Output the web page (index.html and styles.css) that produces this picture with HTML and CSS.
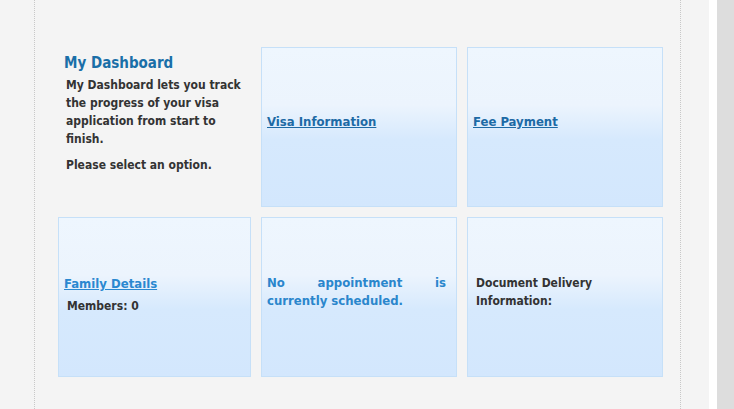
FILE: index.html
```html
<!DOCTYPE html>
<html lang="en">
<head>
    <meta charset="UTF-8">
    <meta name="viewport" content="width=device-width, initial-scale=1.0">
    <title>My Dashboard</title>
    <link rel="stylesheet" href="styles.css">
</head>
<body>

<div class="page">
    <div class="content">
        <div class="dashboard">
            <div class="intro">
                <h2>My Dashboard</h2>
                <p>My Dashboard lets you track the progress of your visa application from start to finish.</p>
                <p>Please select an option.</p>
            </div>

            <div class="tile">
                <a href="#" class="tile-link">Visa Information</a>
            </div>

            <div class="tile">
                <a href="#" class="tile-link">Fee Payment</a>
            </div>

            <div class="tile family">
                <a href="#" class="tile-link light">Family Details</a>
                <div class="members">Members: 0</div>
            </div>

            <div class="tile">
                <div class="appointment">No appointment is currently scheduled.</div>
            </div>

            <div class="tile">
                <div class="delivery">Document Delivery Information:</div>
            </div>
        </div>
    </div>
</div>
<div class="gutter"></div>
<div class="scrollbar"></div>

</body>
</html>
```

FILE: styles.css
```css
body {
    font-family: "DejaVu Sans Condensed", "DejaVu Sans", Verdana, sans-serif;
    background-color: #f4f4f4;
    color: #333;
    margin: 0;
    padding: 0;
    display: flex;
    height: 409px;
    overflow: hidden;
}
.page {
    width: 675px;
    padding-left: 34px;
    background-color: #f4f4f4;
}
.content {
    width: 645px;
    height: 100%;
    border-left: 1px dotted #c8c8c8;
    border-right: 1px dotted #c8c8c8;
    box-sizing: content-box;
}
.gutter {
    width: 8px;
    background-color: #fff;
}
.scrollbar {
    flex: 1;
    background-color: #dddddd;
}
.dashboard {
    display: grid;
    grid-template-columns: 193px 196px 196px;
    grid-auto-rows: 160px;
    gap: 10px;
    padding: 47px 0 0 23px;
}
.intro {
    padding: 7px 0 0 6px;
}
.intro h2 {
    font-size: 15px;
    color: #1a6fa8;
    margin: 0 0 4px;
}
.intro p {
    font-size: 12px;
    font-weight: bold;
    line-height: 18px;
    margin: 0 0 8px 2px;
}
.tile {
    box-sizing: border-box;
    border: 1px solid #c6e0f8;
    background: linear-gradient(#eef6fe 0%, #ecf4fd 36%, #d6e9fd 58%, #d3e7fd 100%);
    display: flex;
    flex-direction: column;
    justify-content: center;
    padding: 0 10px 10px 5px;
    font-size: 12px;
    font-weight: bold;
    line-height: 18px;
}
.tile.family {
    padding-top: 6px;
}
.tile-link {
    color: #1d6aa5;
    font-size: 13px;
    align-self: flex-start;
}
.tile-link.light {
    color: #2a88d0;
}
.members {
    margin: 4px 0 0 3px;
}
.appointment {
    color: #2a86cc;
    font-size: 13px;
    text-align: justify;
}
.delivery {
    padding-left: 3px;
}
```
